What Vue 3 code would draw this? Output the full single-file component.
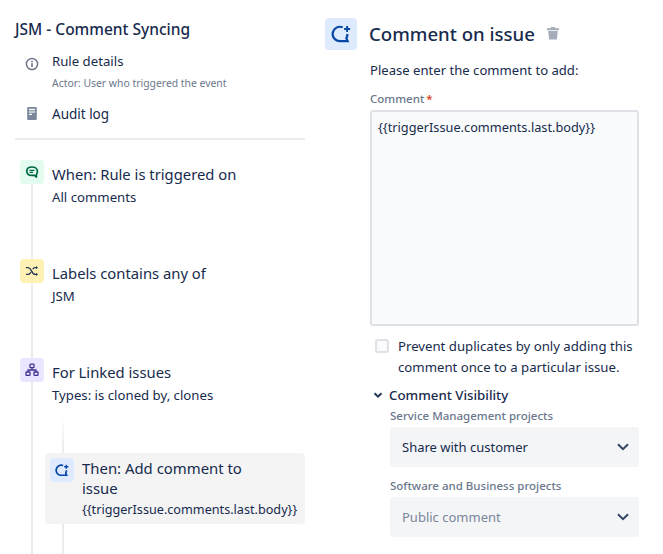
<script setup>
const steps = [
  { key: 'when', tone: 'green', title: 'When: Rule is triggered on', sub: 'All comments' },
  { key: 'labels', tone: 'yellow', title: 'Labels contains any of', sub: 'JSM' },
  { key: 'linked', tone: 'purple', title: 'For Linked issues', sub: 'Types: is cloned by, clones' },
]
</script>

<template>
  <div class="page">
    <aside class="left">
      <h1 class="rule-name">JSM - Comment Syncing</h1>
      <div class="nav-row details">
        <svg class="nav-icon" viewBox="0 0 14 14" width="14" height="14">
          <circle cx="7" cy="7" r="5.6" fill="none" stroke="#6b778c" stroke-width="1.5" />
          <rect x="6.2" y="6.2" width="1.6" height="3.8" fill="#6b778c" />
          <rect x="6.2" y="3.8" width="1.6" height="1.6" fill="#6b778c" />
        </svg>
        <div>
          <div class="nav-label">Rule details</div>
          <div class="actor">Actor: User who triggered the event</div>
        </div>
      </div>
      <div class="nav-row audit">
        <svg class="nav-icon" viewBox="0 0 14 14" width="14" height="14">
          <path d="M3.200 1h7.600a1 1 0 0 1 1 1v11a1 1 0 0 1-1 1H3.200a1 1 0 0 1-1-1V2a1 1 0 0 1 1-1z" fill="#7a869a" />
          <rect x="4" y="2.800" width="6" height="1.400" fill="#fff" />
          <rect x="4" y="5.400" width="6" height="1.200" fill="#fff" />
          <rect x="4" y="7.800" width="3" height="1.200" fill="#fff" />
        </svg>
        <div class="nav-label audit-label">Audit log</div>
      </div>
      <hr class="divider" />

      <div class="timeline">
        <div v-for="step in steps" :key="step.key" class="step" :class="step.key">
          <span class="badge" :class="step.tone">
            <svg v-if="step.key === 'when'" viewBox="0 0 14 14" width="14" height="14" fill="none" stroke="#006644">
              <path d="M7 2C3.800 2 1.800 3.800 1.800 6.200S3.800 10.400 7 10.400h2.400l2 1.600V9.400c.8-.8 1-2 1-3.200C12.400 3.800 10.200 2 7 2z" stroke-width="1.700" stroke-linejoin="round" />
              <path d="M4.500 5.300h5M4.500 7.300h3.600" stroke-width="1.300" />
            </svg>
            <svg v-else-if="step.key === 'labels'" viewBox="0 0 14 14" width="14" height="14" fill="none" stroke="#253858" stroke-width="1.400">
              <path d="M1 3.600h2.400c2.800 0 3.400 6.800 6.600 6.800h2M1 10.400h2.400c1.200 0 1.800-1 2.400-2.200M7.800 5.200c.6-1 1.200-1.600 2.200-1.600h2" />
              <path d="M11 1.900l2 1.700-2 1.700zM11 8.700l2 1.700-2 1.700z" fill="#253858" stroke="none" />
            </svg>
            <svg v-else viewBox="0 0 14 14" width="14" height="14" fill="none" stroke="#403294" stroke-width="1.300">
              <rect x="5" y="1.200" width="4" height="3.400" rx=".6" />
              <rect x="1" y="9" width="4" height="3.400" rx=".6" />
              <rect x="9" y="9" width="4" height="3.400" rx=".6" />
              <path d="M7 4.600v2.400M3 9V7h8v2" />
            </svg>
          </span>
          <div class="step-text">
            <div class="step-title">{{ step.title }}</div>
            <div class="step-sub">{{ step.sub }}</div>
          </div>
        </div>

        <div class="branch">
          <div class="then-card">
            <span class="badge blue">
              <svg viewBox="0 0 18 16" width="14" height="12.500" fill="none" stroke="#0747a6">
                <path d="M10.500 2A6.500 6.500 0 1 0 8 14.500h7l-1.200-2.800a6.500 6.500 0 0 0 .9-3.700" stroke-width="2.200" />
                <path d="M14.500 .8v5.400M11.800 3.500h5.400" stroke-width="1.800" />
              </svg>
            </span>
            <div class="then-text">
              <div class="step-title">Then: Add comment to issue</div>
              <div class="then-sub" v-text="'{{triggerIssue.comments.last.body}}'"></div>
            </div>
          </div>
        </div>
      </div>
    </aside>

    <main class="right">
      <header class="head">
        <span class="head-badge">
          <svg viewBox="0 0 18 16" width="20" height="18" fill="none" stroke="#0747a6">
            <path d="M10.500 2A6.500 6.500 0 1 0 8 14.500h7l-1.200-2.800a6.500 6.500 0 0 0 .9-3.700" stroke-width="2" />
            <path d="M14.500 .8v5.400M11.800 3.500h5.400" stroke-width="1.700" />
          </svg>
        </span>
        <h2 class="head-title">Comment on issue</h2>
        <svg class="trash" viewBox="0 0 14 14" width="14" height="14">
          <path d="M1 2.300h12v1.900H1zM4.800 1h4.400v1.500H4.800zM2.200 5h9.600l-1 8.400H3.200z" fill="#a5adba" />
        </svg>
      </header>

      <div class="form">
        <p class="intro">Please enter the comment to add:</p>
        <div class="label">Comment<span class="req">*</span></div>
        <div class="textarea" v-text="'{{triggerIssue.comments.last.body}}'"></div>

        <div class="check-row">
          <span class="checkbox"></span>
          <span class="check-text">Prevent duplicates by only adding this comment once to a particular issue.</span>
        </div>

        <div class="vis-head">
          <svg viewBox="0 0 10 10" width="10" height="10" fill="none" stroke="#253858" stroke-width="2">
            <path d="M1.500 3.200L5 6.700l3.500-3.500" />
          </svg>
          <span>Comment Visibility</span>
        </div>
        <div class="vis-body">
          <div class="sub-label">Service Management projects</div>
          <div class="select">
            <span>Share with customer</span>
            <svg viewBox="0 0 14 10" width="14" height="10" fill="none" stroke="#344563" stroke-width="2">
              <path d="M2 2.200l5 5 5-5" />
            </svg>
          </div>
          <div class="sub-label second">Software and Business projects</div>
          <div class="select placeholder">
            <span>Public comment</span>
            <svg viewBox="0 0 14 10" width="14" height="10" fill="none" stroke="#344563" stroke-width="2">
              <path d="M2 2.200l5 5 5-5" />
            </svg>
          </div>
        </div>
      </div>
    </main>
  </div>
</template>

<style>
html, body { margin: 0; background: #fff; overflow: hidden; }
</style>

<style scoped>
.page {
  display: flex;
  width: 663px;
  height: 554px;
  overflow: hidden;
  font-family: "Noto Sans", "Open Sans", sans-serif;
  color: #172b4d;
  box-sizing: border-box;
  padding-left: 15px;
}
.left { width: 290px; flex: none; }
.rule-name {
  margin: 20px 0 0;
  font-size: 15.500px;
  line-height: 18px;
  font-weight: 500;
}
.nav-row { display: flex; gap: 13px; padding-left: 10px; }
.nav-icon { flex: none; margin-top: 5px; }
.details .nav-icon { margin-top: 6px; }
.audit .nav-icon { margin-top: 2px; }
.details { margin-top: 13px; }
.audit { margin-top: 14px; }
.nav-label { font-size: 13.200px; line-height: 20px; }
.audit-label { font-size: 13.500px; }
.actor { font-size: 10.400px; line-height: 14px; margin-top: 5px; color: #6b778c; }
.divider { margin: 14px 0 0; border: 0; height: 2px; background: #ebecf0; }
.timeline { position: relative; padding-top: 20px; height: 412px; }
.timeline::before {
  content: "";
  position: absolute;
  left: 16px;
  top: 44px;
  bottom: 0;
  width: 2px;
  background: #ebecf0;
}
.step { position: relative; display: flex; gap: 8px; padding-left: 5px; height: 99px; }
.badge {
  width: 24px;
  height: 24px;
  border-radius: 4px;
  display: flex;
  align-items: center;
  justify-content: center;
  flex: none;
  position: relative;
}
.green { background: #e3fcef; }
.yellow { background: #fff0b3; }
.purple { background: #eae6ff; }
.blue { background: #deebff; }
.step-title { font-size: 14.800px; line-height: 20px; margin-top: 4px; }
.step-sub { font-size: 13.200px; line-height: 18px; margin-top: 4px; }
.branch { position: relative; margin-top: -4px; height: 140px; }
.branch::before {
  content: "";
  position: absolute;
  left: 47px;
  top: -36px;
  bottom: 0;
  width: 2px;
  background: linear-gradient(#fff, #ebecf0 30px);
}
.then-card {
  position: relative;
  margin-left: 30px;
  background: rgba(243, 243, 244, .92);
  border-radius: 4px;
  padding: 5px;
  display: flex;
  gap: 8px;
  height: 61px;
  width: 250px;
}
.then-text { width: 218px; }
.then-text .step-title { width: 180px; font-size: 14.900px; line-height: 20px; margin-top: 0; }
.then-sub { font-size: 12.650px; line-height: 16px; margin-top: 3px; white-space: nowrap; }

.right { margin-left: 20px; flex: none; width: 314px; }
.head { display: flex; align-items: center; margin-top: 18px; }
.head-badge {
  width: 32px;
  height: 32px;
  background: #deebff;
  border-radius: 4px;
  display: flex;
  align-items: center;
  justify-content: center;
}
.head-title {
  margin: 0 0 0 12px;
  font-size: 18.600px;
  line-height: 32px;
  font-weight: 500;
}
.trash { margin-left: 11px; margin-top: -2px; }
.form { padding-left: 45px; }
.intro { margin: 10px 0 0; font-size: 13.100px; line-height: 20px; }
.label { margin-top: 11px; font-size: 11.500px; line-height: 16px; font-weight: 500; color: #6b778c; }
.req { color: #de350b; margin-left: 2px; }
.textarea {
  margin-top: 3px;
  box-sizing: border-box;
  height: 216px;
  width: 269px;
  background: #fafbfc;
  border: 2px solid #dfe1e6;
  border-radius: 3px;
  padding: 5px 6px;
  font-size: 12.750px;
  line-height: 20px;
}
.check-row { display: flex; margin-top: 10px; padding-left: 5px; gap: 9px; }
.checkbox {
  flex: none;
  box-sizing: border-box;
  width: 14px;
  height: 14px;
  margin-top: 3px;
  background: #fafbfc;
  border: 2px solid #dfe1e6;
  border-radius: 3px;
}
.check-text { font-size: 13.200px; line-height: 21px; width: 246px; }
.vis-head {
  display: flex;
  align-items: center;
  gap: 6px;
  margin-top: 8px;
  padding-left: 3px;
  font-size: 13.300px;
  line-height: 18px;
  font-weight: 500;
}
.vis-body { padding-left: 20px; }
.sub-label { font-size: 11.500px; line-height: 16px; font-weight: 500; color: #6b778c; margin-top: 4px; }
.sub-label.second { margin-top: 11px; }
.select {
  display: flex;
  align-items: center;
  justify-content: space-between;
  margin-top: 3px;
  box-sizing: border-box;
  width: 249px;
  height: 40px;
  padding: 0 9px 0 12px;
  background: #f4f5f7;
  border-radius: 3px;
  font-size: 13px;
}
.placeholder { color: #7a869a; }
</style>
